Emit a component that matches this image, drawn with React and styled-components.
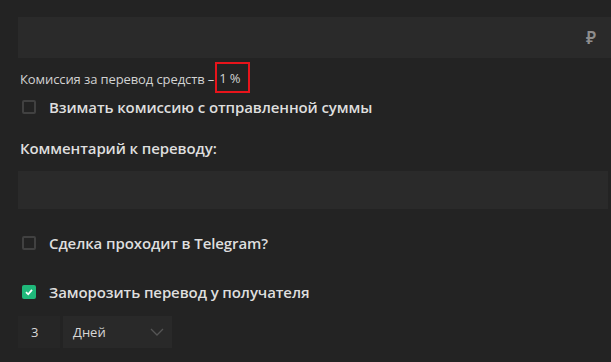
import React, { useState } from 'react';
import styled, { createGlobalStyle } from 'styled-components';

const GlobalStyle = createGlobalStyle`
  html, body {
    margin: 0;
    padding: 0;
    background: #232323;
    font-family: 'Open Sans', 'Noto Sans', sans-serif;
    overflow: hidden;
  }
`;

const Page = styled.div`
  display: flex;
  flex-direction: column;
  padding: 17px 0 0 18px;
  width: 611px;
  height: 362px;
  box-sizing: border-box;
`;

const InputBox = styled.div`
  display: flex;
  align-items: center;
  justify-content: flex-end;
  height: ${(p) => p.$height}px;
  margin-right: ${(p) => p.$right}px;
  background: #2a2a2a;
  padding-right: 15px;
  box-sizing: border-box;
`;

const Currency = styled.span`
  color: #8d8d8d;
  font-size: 17px;
  font-weight: 600;
`;

const FeeText = styled.div`
  margin-top: 12px;
  margin-left: 2px;
  color: #d2d2d2;
  font-size: 13px;
  line-height: 18px;
  display: flex;
  align-items: center;
  letter-spacing: -0.1px;
`;

const Highlight = styled.span`
  display: inline-flex;
  align-items: center;
  height: 31px;
  margin-left: 1px;
  padding: 0 8px 0 2px;
  border: 2px solid #e8141b;
  box-sizing: border-box;
  margin-top: -9px;
  margin-bottom: -6px;
`;

const CheckRow = styled.label`
  display: flex;
  align-items: center;
  gap: 13px;
  margin-top: ${(p) => p.$top}px;
  margin-left: 4px;
  cursor: pointer;
`;

const Box = styled.span`
  width: 14px;
  height: 14px;
  box-sizing: border-box;
  border-radius: 2px;
  border: ${(p) => (p.$checked ? 'none' : '2px solid #414141')};
  background: ${(p) => (p.$checked ? '#1fb87a' : 'transparent')};
  display: flex;
  align-items: center;
  justify-content: center;
`;

const BoldText = styled.span`
  color: #dedede;
  font-size: 15px;
  font-weight: 600;
  line-height: 20px;
  letter-spacing: -0.1px;
`;

const SectionLabel = styled(BoldText)`
  margin-top: 21px;
  margin-left: 2px;
`;

const Spacer = styled.div`
  height: ${(p) => p.$h}px;
`;

const PeriodRow = styled.div`
  display: flex;
  gap: 3px;
  margin-top: 14px;
`;

const NumberBox = styled.div`
  width: 42px;
  height: 32px;
  background: #262626;
  color: #d8d8d8;
  font-size: 13px;
  display: flex;
  align-items: center;
  padding-left: 13px;
  box-sizing: border-box;
`;

const SelectBox = styled.div`
  width: 109px;
  height: 32px;
  background: #292929;
  color: #d8d8d8;
  font-size: 13px;
  display: flex;
  align-items: center;
  justify-content: space-between;
  padding: 0 8px 0 10px;
  box-sizing: border-box;
`;

const Check = ({ checked, label, top, onToggle }) => (
  <CheckRow $top={top} onClick={onToggle}>
    <Box $checked={checked}>
      {checked && (
        <svg width="10" height="10" viewBox="0 0 10 10">
          <path d="M2 5.2 L4.2 7.3 L8 2.8" fill="none" stroke="#fff" strokeWidth="1.8" />
        </svg>
      )}
    </Box>
    <BoldText>{label}</BoldText>
  </CheckRow>
);

const App = () => {
  const [fee, setFee] = useState(false);
  const [tg, setTg] = useState(false);
  const [freeze, setFreeze] = useState(true);

  return (
    <>
      <GlobalStyle />
      <Page>
        <InputBox $height={41} $right={0}>
          <Currency>₽</Currency>
        </InputBox>
        <FeeText>
          Комиссия за перевод средств –<Highlight>1 %</Highlight>
        </FeeText>
        <Check top={9} checked={fee} onToggle={() => setFee(!fee)} label="Взимать комиссию с отправленной суммы" />
        <SectionLabel>Комментарий к переводу:</SectionLabel>
        <Spacer $h={13} />
        <InputBox $height={38} $right={3} />
        <Check top={24} checked={tg} onToggle={() => setTg(!tg)} label="Сделка проходит в Telegram?" />
        <Check top={29} checked={freeze} onToggle={() => setFreeze(!freeze)} label="Заморозить перевод у получателя" />
        <PeriodRow>
          <NumberBox>3</NumberBox>
          <SelectBox>
            Дней
            <svg width="14" height="8" viewBox="0 0 14 8">
              <path d="M1 1 L7 7 L13 1" fill="none" stroke="#555" strokeWidth="1.3" />
            </svg>
          </SelectBox>
        </PeriodRow>
      </Page>
    </>
  );
};

export default App;
